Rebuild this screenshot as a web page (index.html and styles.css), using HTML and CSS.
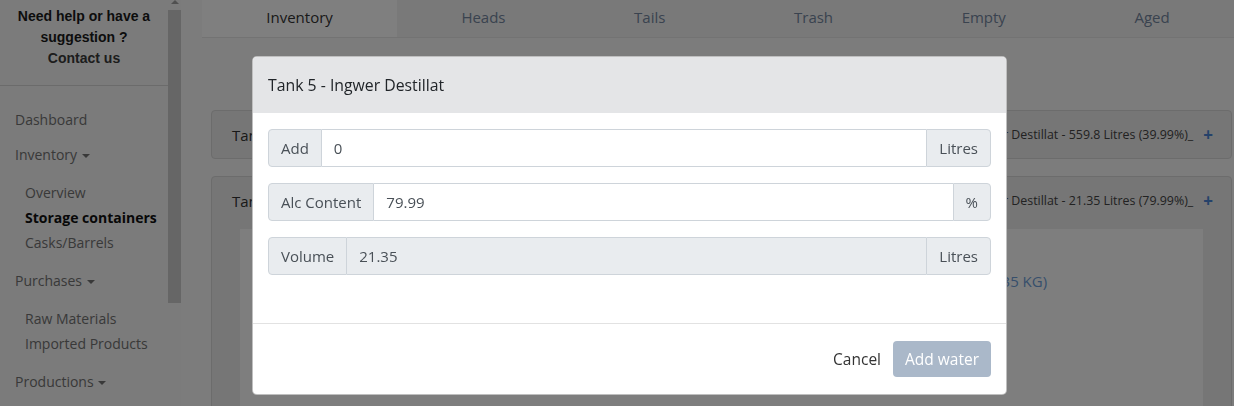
FILE: index.html
```html
<!DOCTYPE html>
<html lang="en">
<head>
<meta charset="utf-8">
<title>Storage containers</title>
<link rel="stylesheet" href="styles.css">
</head>
<body>
<div class="app">
  <aside class="sidebar">
    <div class="side-content">
      <div class="help">
        <div class="help-q">Need help or have a suggestion ?</div>
        <div class="help-c">Contact us</div>
      </div>
      <nav class="menu">
        <div class="menu-item">Dashboard</div>
        <div class="menu-item">Inventory <span class="caret"></span></div>
        <div class="submenu">
          <div class="sub-item">Overview</div>
          <div class="sub-item active">Storage containers</div>
          <div class="sub-item">Casks/Barrels</div>
        </div>
        <div class="menu-item">Purchases <span class="caret"></span></div>
        <div class="submenu">
          <div class="sub-item">Raw Materials</div>
          <div class="sub-item">Imported Products</div>
        </div>
        <div class="menu-item">Productions <span class="caret"></span></div>
      </nav>
    </div>
    <div class="scrollbar">
      <div class="sb-arrow"></div>
      <div class="sb-thumb"></div>
    </div>
  </aside>
  <main class="main">
    <div class="tabs">
      <div class="tab active">Inventory</div>
      <div class="tab">Heads</div>
      <div class="tab">Tails</div>
      <div class="tab">Trash</div>
      <div class="tab">Empty</div>
      <div class="tab">Aged</div>
    </div>
    <div class="panels">
      <div class="panel">
        <div class="panel-head">
          <span class="panel-title">Tank 4</span>
          <span class="panel-info">Tank 4 - Ingwer Destillat - 559.8 Litres (39.99%)_</span>
          <span class="plus">+</span>
        </div>
      </div>
      <div class="panel">
        <div class="panel-head">
          <span class="panel-title">Tank 5</span>
          <span class="panel-info">Tank 5 - Ingwer Destillat - 21.35 Litres (79.99%)_</span>
          <span class="plus">+</span>
        </div>
        <div class="panel-body">
          <div class="weight">Ingwer Destillat 21.35 Litres (21.35 KG)</div>
        </div>
      </div>
    </div>
  </main>
</div>

<div class="backdrop"></div>

<div class="modal">
  <div class="modal-header">Tank 5 - Ingwer Destillat</div>
  <div class="modal-body">
    <div class="input-group">
      <span class="addon">Add</span>
      <span class="field">0</span>
      <span class="addon addon-right">Litres</span>
    </div>
    <div class="input-group">
      <span class="addon">Alc Content</span>
      <span class="field">79.99</span>
      <span class="addon addon-right">%</span>
    </div>
    <div class="input-group">
      <span class="addon">Volume</span>
      <span class="field disabled">21.35</span>
      <span class="addon addon-right">Litres</span>
    </div>
  </div>
  <div class="modal-footer">
    <button class="btn btn-link">Cancel</button>
    <button class="btn btn-primary">Add water</button>
  </div>
</div>
</body>
</html>
```

FILE: styles.css
```css
* { box-sizing: border-box; }

html, body {
  margin: 0;
  padding: 0;
  width: 1234px;
  height: 406px;
  overflow: hidden;
}

body {
  font-family: "Open Sans", "Noto Sans", sans-serif;
  color: #212529;
  background: #f8f8f8;
}

.app {
  display: flex;
  height: 406px;
}

/* Sidebar */
.sidebar {
  display: flex;
  width: 181px;
  flex: none;
  background: #f6f6f6;
}

.side-content {
  width: 168px;
}

.help {
  text-align: center;
  font-family: "Liberation Sans", Arial, sans-serif;
  font-weight: bold;
  font-size: 14px;
  line-height: 21px;
  padding: 6px 8px 16px;
  border-bottom: 1px solid #d6d6d6;
  color: #1a1a1a;
}

.help-c {
  color: #3a3a3a;
}

.menu {
  padding-top: 24px;
  font-size: 14px;
}

.menu-item {
  padding-left: 15px;
  line-height: 20px;
  color: #727272;
  margin-bottom: 15px;
}

.submenu {
  margin-top: 3px;
  margin-bottom: 16px;
}

.sub-item {
  padding-left: 25px;
  line-height: 25px;
  color: #727272;
}

.sub-item.active {
  color: #111;
  font-weight: bold;
}

.caret {
  display: inline-block;
  width: 0;
  height: 0;
  border-left: 4px solid transparent;
  border-right: 4px solid transparent;
  border-top: 4px solid #727272;
  vertical-align: middle;
  margin-left: 1px;
}

.scrollbar {
  width: 13px;
  display: flex;
  flex-direction: column;
  align-items: center;
}

.sb-arrow {
  width: 0;
  height: 0;
  border-left: 4px solid transparent;
  border-right: 4px solid transparent;
  border-bottom: 4px solid #a0a0a0;
}

.sb-thumb {
  width: 13px;
  height: 293px;
  margin-top: 6px;
  background: #cdcdcd;
}

/* Main */
.main {
  flex: 1;
  padding-left: 21px;
  background: #f8f8f8;
}

.tabs {
  display: flex;
  height: 38px;
  background: #f2f2f2;
  border-bottom: 1px solid #e6e6e6;
}

.tab {
  flex: 1 1 auto;
  text-align: center;
  font-size: 15px;
  line-height: 35px;
  color: #74869f;
}

.tab.active {
  background: #ffffff;
  color: #333;
}

.panels {
  padding: 72px 2px 0 9px;
}

.panel {
  background: #ececec;
  border: 1px solid #d8d8d8;
  border-radius: 4px;
  margin-bottom: 17px;
}

.panel-head {
  display: flex;
  align-items: center;
  height: 47px;
  padding: 0 18px 0 20px;
}

.panel-title {
  font-size: 15px;
  color: #333;
  flex: 1;
}

.panel-info {
  font-size: 12.4px;
  color: #444;
}

.plus {
  font-weight: bold;
  font-size: 17px;
  color: #4a85d4;
  margin-left: 10px;
}

.panel-body {
  margin: 5px 28px 0 28px;
  background: #fdfdfd;
  height: 200px;
  padding: 42px 0 0 0;
}

.weight {
  font-size: 15px;
  color: #6e9ed8;
  padding-left: 539px;
}

/* Backdrop + modal */
.backdrop {
  position: fixed;
  inset: 0;
  background: rgba(0, 0, 0, 0.5);
}

.modal {
  position: fixed;
  left: 252px;
  top: 56px;
  width: 755px;
  height: 339px;
  background: #fff;
  border: 1px solid rgba(0, 0, 0, 0.25);
  border-radius: 5px;
  overflow: hidden;
  display: flex;
  flex-direction: column;
}

.modal-header {
  height: 56px;
  flex: none;
  background: #e4e5e7;
  display: flex;
  align-items: center;
  padding: 0 15px;
  font-size: 15.8px;
  color: #212529;
}

.modal-body {
  padding: 16px 15px 32px;
  border-bottom: 1px solid #e2e2e2;
}

.input-group {
  display: flex;
  height: 38px;
  margin-bottom: 16px;
  font-size: 15px;
  color: #495057;
}

.addon {
  display: flex;
  align-items: center;
  padding: 0 12px;
  background: #e9ecef;
  border: 1px solid #ced4da;
  border-radius: 4px 0 0 4px;
}

.addon-right {
  border-radius: 0 4px 4px 0;
}

.field {
  flex: 1;
  display: flex;
  align-items: center;
  padding: 0 12px;
  border-top: 1px solid #ced4da;
  border-bottom: 1px solid #ced4da;
  background: #fff;
}

.field.disabled {
  background: #e9ecef;
}

.modal-footer {
  flex: 1;
  display: flex;
  justify-content: flex-end;
  align-items: center;
  padding: 0 15px;
}

.btn {
  font-family: inherit;
  font-size: 15.5px;
  height: 36px;
  padding: 0 12px;
  border: none;
  border-radius: 4px;
  background: none;
}

.btn-link {
  color: #333;
  margin-right: 1px;
  padding: 0 11px;
}

.btn-primary {
  background: #aab8c9;
  color: #fff;
}
```
